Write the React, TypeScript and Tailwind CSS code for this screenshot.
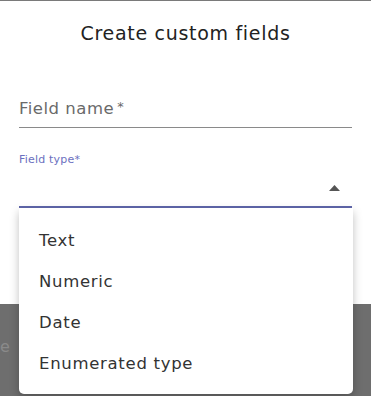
import { FC } from "react";

const options = ["Text", "Numeric", "Date", "Enumerated type"];

const App: FC = () => {
  return (
    <div
      className="relative w-[371px] h-[396px] overflow-hidden bg-[#6e6e6e]"
      style={{ fontFamily: '"DejaVu Sans", sans-serif' }}
    >
      <div className="border-t border-[#7a7a7a] bg-white h-[304px] px-[19px] flex flex-col">
        <h2 className="text-[19px] tracking-[0.7px] text-[#222] text-center mt-[21px] leading-[22px]">
          Create custom fields
        </h2>

        <div className="mt-[53px] border-b border-[#8a8a8a] pb-[6px]">
          <span className="text-[16.5px] tracking-[0.5px] leading-[20px] text-[#6a6a6a]">
            Field name<span className="text-[13px] align-top ml-[3px]">*</span>
          </span>
        </div>

        <div className="mt-[25px]">
          <div className="text-[11px] tracking-[0.2px] leading-[14px] text-[#6b70c0]">Field type*</div>
          <div className="h-[41px] border-b-2 border-[#5f66aa] flex items-center justify-end pr-[12px]">
            <svg width="11" height="6" viewBox="0 0 11 6" className="mt-[2px]">
              <path d="M0 6 L5.5 0 L11 6 Z" fill="#555" />
            </svg>
          </div>
        </div>
      </div>

      <span className="absolute left-[0px] top-[335px] text-[16px] text-[#8a8a8a]">e</span>

      <ul className="absolute left-[19px] top-[208px] w-[334px] h-[186px] bg-white rounded-b-[5px] shadow-[0_4px_10px_rgba(0,0,0,0.25)] pt-[13px]">
        {options.map((o) => (
          <li key={o} className="h-[41px] flex items-center px-[20px] text-[16.5px] tracking-[0.7px] text-[#333]">
            {o}
          </li>
        ))}
      </ul>
    </div>
  );
};

export default App;
